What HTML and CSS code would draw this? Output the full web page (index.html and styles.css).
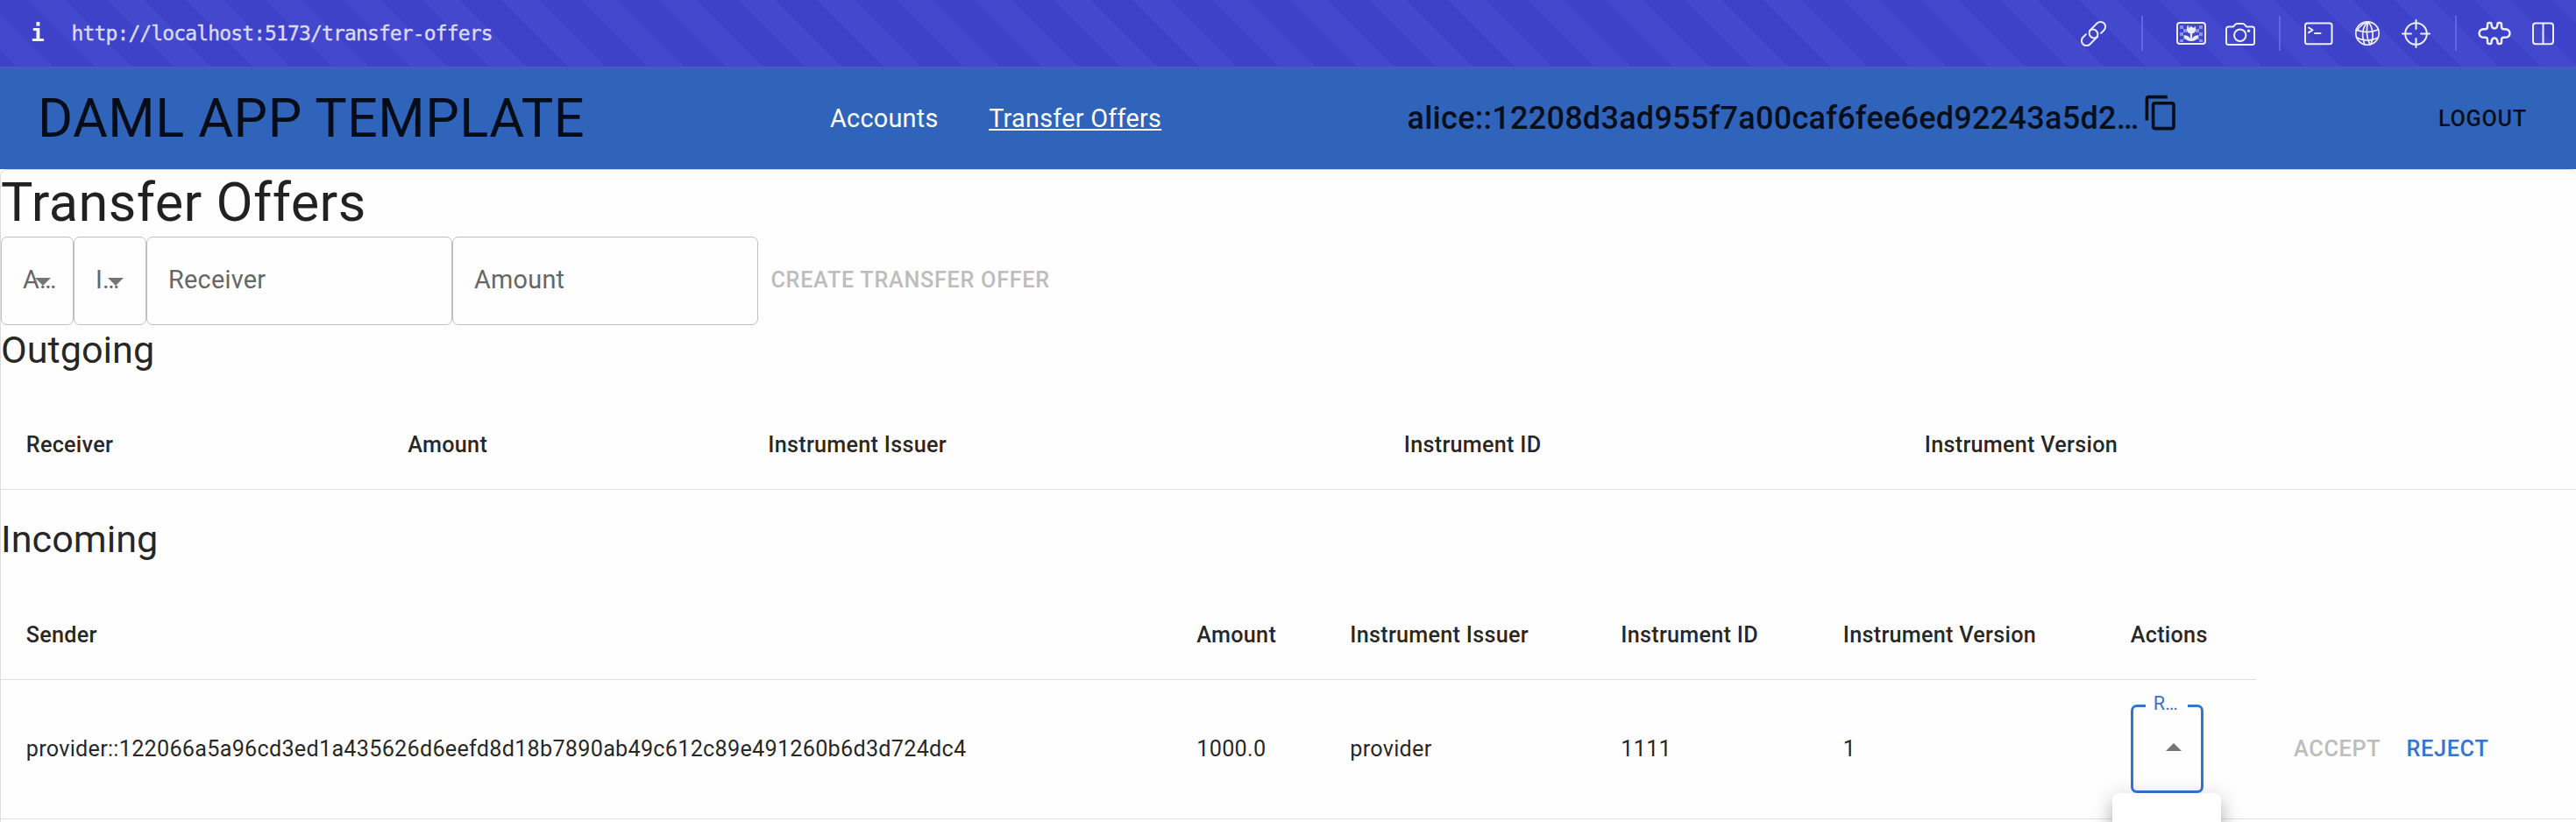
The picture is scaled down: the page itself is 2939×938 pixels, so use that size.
FILE: index.html
```html
<!DOCTYPE html>
<html lang="en">
<head>
<meta charset="utf-8">
<title>Transfer Offers</title>
<link rel="stylesheet" href="styles.css">
</head>
<body>
<div class="browser-bar">
  <span class="info">i</span>
  <span class="url">http://localhost:5173/transfer-offers</span>
  <div class="tools">
    <svg class="ic" width="32" height="40" viewBox="0 0 32 40"><g transform="translate(15.5 20.5) rotate(-45)"><path d="M6.5 5.6H11.3A5.6 5.6 0 0 0 11.3-5.6H1A5.6 5.6 0 0 0 1 5.6"/><path d="M-6.5-5.6H-11.3A5.6 5.6 0 0 0-11.3 5.6H-1A5.6 5.6 0 0 0-1-5.6"/></g></svg>
    <i class="sep sep-a"></i>
    <svg class="ic" width="36" height="40" viewBox="0 0 36 40"><g class="check"><path d="M5 11h4v4H5zM9 15h4v4H9zM5 19h4v4H5zM9 23h4v4H9zM5 27h4v3H5zM13 11h3v3h-3zM23 15h4v4h-4zM27 11h4v4h-4zM27 19h4v4h-4zM23 23h4v4h-4zM27 27h4v3h-4z"/></g><rect x="2" y="8" width="32" height="24" rx="3"/><path class="solid" d="M13 12l2.6 2 2.4-2.2 2.4 2.2 2.6-2v4c0 2.6-1.6 3.8-3.8 4.2v6c1-2.6 4-4.200 7-4 0 4-3 6.600-8.200 6.800-5.200-.2-8.200-2.800-8.200-6.800 3-.2 6 1.400 7 4v-6c-2.200-.4-3.800-1.600-3.800-4.200z"/></svg>
    <svg class="ic gap-cam" width="36" height="40" viewBox="0 0 36 40"><path d="M4.500 12.500h5c1.500 0 2-3.500 4.500-3.500h7c2.500 0 3 3.500 4.500 3.500h6A2.500 2.500 0 0 1 34 15v15.500a2.500 2.500 0 0 1-2.500 2.500h-27A2.500 2.500 0 0 1 2 30.500V15a2.500 2.500 0 0 1 2.500-2.500z"/><circle cx="17.700" cy="22.300" r="6.700"/><circle class="solid" cx="27.500" cy="17.300" r="1.700"/></svg>
    <i class="sep sep-b"></i>
    <svg class="ic" width="34" height="40" viewBox="0 0 34 40"><rect x="2" y="8.600" width="30.500" height="23.700" rx="2.500"/><path d="M6 13.500l4.500 2.800-4.500 2.800M13 20h6.500"/></svg>
    <svg class="ic thin gap-globe" width="30" height="40" viewBox="0 0 30 40"><circle cx="15" cy="20" r="13.200"/><path d="M16 7C9 12 8 23 12 33M16 7c-3 8-2 19 2 26M16 7c5 6 7 17 3 25M16 7c-7 1-11 7-13 10M2 16c8 3 16 4 25 0M3 25c7 4 17 4 24 0"/></svg>
    <svg class="ic gap-cross" width="35" height="40" viewBox="0 0 35 40"><circle cx="17.500" cy="20.500" r="12.300"/><path d="M17.500 5v10M17.500 26v10M2 20.500h10M23 20.500h10"/></svg>
    <i class="sep sep-c"></i>
    <svg class="ic bold" width="40" height="40" viewBox="0 0 40 40"><path d="M12 10q0-2 2-2h1.200q1.200 0 1.300 1.600c.2 3.400 1.300 4.800 3.500 4.800s3.300-1.400 3.500-4.800q.1-1.600 1.300-1.600h1.200q2 0 2 2v2.500q0 2.700 2.500 2.700c4.500-.4 7 1.500 7 4.800s-2.500 5.200-7 4.800q-2.500 0-2.500 2.700v2.500q0 2-2 2h-1.200q-1.200 0-1.300-1.600c-.2-3.400-1.300-4.800-3.500-4.800s-3.300 1.400-3.500 4.800q-.1 1.600-1.300 1.600h-1.200q-2 0-2-2v-2.500q0-2.700-2.500-2.700c-4.500.4-7-1.500-7-4.800s2.500-5.200 7-4.800q2.500 0 2.500-2.700z"/></svg>
    <svg class="ic gap-split" width="27" height="40" viewBox="0 0 27 40"><rect x="2" y="8.600" width="23" height="23.700" rx="3"/><path d="M13.500 9v23"/></svg>
  </div>
</div>

<header class="app-bar">
  <div class="brand">DAML APP TEMPLATE</div>
  <nav class="nav">
    <a class="nav-link">Accounts</a>
    <a class="nav-link active">Transfer Offers</a>
  </nav>
  <div class="party"><span>alice::12208d3ad955f7a00caf6fee6ed92243a5d2…</span><svg class="copy" viewBox="0 0 24 24"><path d="M16 1H4c-1.100 0-2 .9-2 2v14h2V3h12V1zm3 4H8c-1.100 0-2 .9-2 2v14c0 1.100.9 2 2 2h11c1.100 0 2-.9 2-2V7c0-1.100-.9-2-2-2zm0 16H8V7h11v14z"/></svg></div>
  <div class="logout">LOGOUT</div>
</header>

<main class="page">
  <h1 class="title">Transfer Offers</h1>
  <div class="form">
    <div class="field select"><span>A…</span><b class="caret"></b></div>
    <div class="field select"><span>I…</span><b class="caret"></b></div>
    <div class="field text">Receiver</div>
    <div class="field text">Amount</div>
    <div class="btn disabled create">CREATE TRANSFER OFFER</div>
  </div>

  <h2 class="subtitle">Outgoing</h2>
  <div class="row head outgoing">
    <div class="cell">Receiver</div><div class="cell">Amount</div><div class="cell">Instrument Issuer</div><div class="cell">Instrument ID</div><div class="cell">Instrument Version</div>
  </div>

  <h2 class="subtitle spaced">Incoming</h2>
  <div class="row head incoming short">
    <div class="cell">Sender</div><div class="cell">Amount</div><div class="cell">Instrument Issuer</div><div class="cell">Instrument ID</div><div class="cell">Instrument Version</div><div class="cell">Actions</div>
  </div>
  <div class="row incoming body">
    <div class="cell">provider::122066a5a96cd3ed1a435626d6eefd8d18b7890ab49c612c89e491260b6d3d724dc4</div>
    <div class="cell">1000.0</div>
    <div class="cell">provider</div>
    <div class="cell">1111</div>
    <div class="cell">1</div>
    <div class="cell">
      <div class="picker"><span class="picker-label">R…</span><b class="caret up"></b><div class="menu"></div></div>
    </div>
    <div class="actions"><div class="btn disabled">ACCEPT</div><div class="btn primary">REJECT</div></div>
  </div>
</main>
</body>
</html>
```
FILE: styles.css
```css
html { font-size: 28.8px; }
* { box-sizing: border-box; }
body {
  margin: 0;
  width: 2939px;
  height: 938px;
  overflow: hidden;
  background: #fefefe;
  color: rgba(0, 0, 0, 0.87);
  font-family: Roboto, "Liberation Sans", sans-serif;
  letter-spacing: 0.00938em;
}

/* browser chrome */
.browser-bar {
  display: flex;
  align-items: center;
  height: 78px;
  padding: 0 24px 0 35px;
  border-bottom: 2px solid #5054cd;
  background: repeating-linear-gradient(45deg, #3e42c9 0 12.73px, #4348cd 12.73px 42.43px, #3e42c9 42.43px 63.64px);
  color: #e4e4fa;
  font-family: "DejaVu Sans Mono", monospace;
  font-size: 23px;
  letter-spacing: -0.87px;
}
.info { width: 46.5px; font-size: 26px; font-weight: 700; line-height: 1; color: #f1f1fd; }
.url { white-space: nowrap; color: #d9daf8; -webkit-text-stroke: 0.4px #d9daf8; }
.tools { display: flex; align-items: center; margin-left: auto; }
.ic { display: block; fill: none; stroke: #ecedfd; stroke-width: 2; stroke-linecap: round; stroke-linejoin: round; }
.ic.thin { stroke-width: 1.7; }
.ic.bold { stroke-width: 2.5; }
.ic .solid { fill: #ecedfd; stroke: none; }
.ic .check { fill: #8f92e2; stroke: none; }
.sep { width: 2px; height: 40px; background: #6265e0; }
.sep-a { margin: 0 37px 0 38px; }
.sep-b { margin: 0 26px; }
.sep-c { margin: 0 23px 0 27px; }
.gap-cam { margin-left: 20px; }
.gap-globe { margin-left: 24px; }
.gap-cross { margin-left: 23px; }
.gap-split { margin-left: 22px; }

/* application bar */
.app-bar {
  display: grid;
  grid-template-columns: 904px 658.5px 1176.5px auto;
  align-items: center;
  height: 115px;
  padding: 0 0 1px 43px;
  background: #2f64ba;
  white-space: nowrap;
}
.brand { font-size: 61.2px; letter-spacing: 0.00735em; }
.nav { display: flex; gap: 57.6px; font-size: 1rem; color: #fff; }
.active { text-decoration: underline; text-decoration-thickness: 2px; text-underline-offset: 2px; }
.party { display: flex; align-items: center; font-size: 36px; font-weight: 500; letter-spacing: 0.0075em; }
.copy { width: 43.2px; height: 43.2px; margin: -12px 0 0 4px; fill: currentColor; }
.logout { font-size: 25.2px; font-weight: 500; letter-spacing: 0.02857em; }

/* page */
.page { height: 745px; overflow: hidden; border: 1px solid #dedede; border-width: 1px 0 0 1px; border-radius: 8px 8px 0 0; background: #fefefe; }
.title { margin: 0 0 1px; font-size: 61.2px; font-weight: 400; line-height: 75px; letter-spacing: 0.00735em; }
.form { display: flex; height: 101px; }
.field {
  display: flex;
  align-items: center;
  height: 101px;
  padding: 0 0 3px 24px;
  border: 1px solid #bfbfbf;
  border-radius: 7px;
  color: #666;
  font-size: 1rem;
}
.field.select { position: relative; width: 83px; }
.field.text { width: 349px; }
.caret {
  position: absolute;
  right: 25px;
  top: 46px;
  border: 9px solid transparent;
  border-top-color: #757575;
  border-bottom: 0;
}
.caret.up { right: 22px; top: 41px; border-top: 0; border-bottom: 9px solid #757575; }
.btn { font-size: 25.2px; font-weight: 500; letter-spacing: 0.02857em; white-space: nowrap; }
.disabled { color: #bdbdbd; }
.primary { color: #3574d0; }
.create { align-self: center; padding: 0 0 2px 14.400px; }
.subtitle { margin: 0 0 28.8px; font-size: 43.2px; font-weight: 400; line-height: 57.6px; letter-spacing: 0; }
.spaced { margin-top: 28px; }

.row { display: grid; align-items: center; height: 102px; border-bottom: 1px solid #e0e0e0; font-size: 25.2px; letter-spacing: 0.01071em; }
.head { font-weight: 500; }
.cell { padding-left: 28.8px; white-space: nowrap; }
.outgoing { grid-template-columns: 435.5px 411px 725.5px 594px 1fr; }
.incoming { grid-template-columns: 1335.5px 175px 309px 253.5px 328px 171px 1fr; }
.short { width: 2573px; }
.body { height: 159px; }
.picker { position: relative; width: 83px; height: 101px; border: 3.600px solid #3574d0; border-radius: 7px; }
.picker-label {
  position: absolute;
  left: 14px;
  top: -17px;
  width: 48px;
  padding-left: 9px;
  background: #fefefe;
  color: #3574d0;
  font-size: 21.6px;
  line-height: 26px;
  letter-spacing: 0.00938em;
}
.menu {
  position: absolute;
  left: -24px;
  top: 98px;
  width: 124px;
  height: 80px;
  border-radius: 7px;
  background: #fff;
  box-shadow: 0 9px 9px -5px rgba(0, 0, 0, 0.2), 0 14px 18px 2px rgba(0, 0, 0, 0.14), 0 5px 25px 4px rgba(0, 0, 0, 0.12);
}
.actions { display: flex; gap: 29px; padding-left: 44px; }
```
